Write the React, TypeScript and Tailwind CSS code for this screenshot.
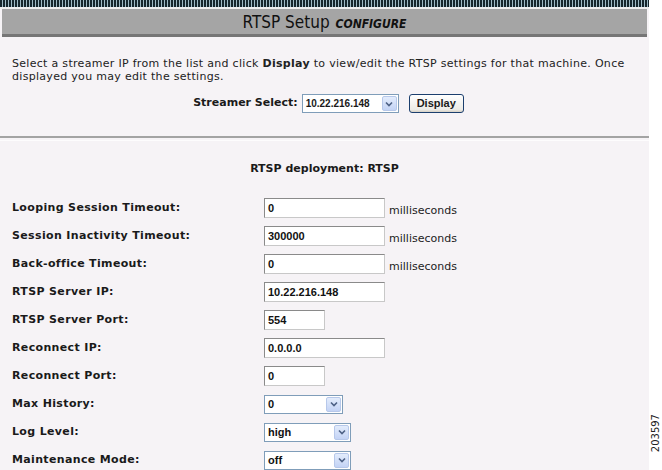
import React from 'react';

const verdana = { fontFamily: '"DejaVu Sans", Verdana, sans-serif' };

type Row = {
  label: string;
  kind: 'input' | 'select';
  value: string;
  width: string;
  unit?: string;
};

const rows: Row[] = [
  { label: 'Looping Session Timeout:', kind: 'input', value: '0', width: 'w-[121px]', unit: 'milliseconds' },
  { label: 'Session Inactivity Timeout:', kind: 'input', value: '300000', width: 'w-[121px]', unit: 'milliseconds' },
  { label: 'Back-office Timeout:', kind: 'input', value: '0', width: 'w-[121px]', unit: 'milliseconds' },
  { label: 'RTSP Server IP:', kind: 'input', value: '10.22.216.148', width: 'w-[121px]' },
  { label: 'RTSP Server Port:', kind: 'input', value: '554', width: 'w-[61px]' },
  { label: 'Reconnect IP:', kind: 'input', value: '0.0.0.0', width: 'w-[121px]' },
  { label: 'Reconnect Port:', kind: 'input', value: '0', width: 'w-[61px]' },
  { label: 'Max History:', kind: 'select', value: '0', width: 'w-[79px]' },
  { label: 'Log Level:', kind: 'select', value: 'high', width: 'w-[87px]' },
  { label: 'Maintenance Mode:', kind: 'select', value: 'off', width: 'w-[87px]' },
];

const Arrow = () => (
  <div className="w-[15px] h-[15px] mr-[1px] rounded-[2px] border border-[#b7c8ea] bg-[linear-gradient(180deg,#e3ecfc_0%,#c3d3f5_100%)] flex items-center justify-center">
    <svg width="8" height="6" viewBox="0 0 8 6">
      <path d="M1 1.5 L4 4.5 L7 1.5" fill="none" stroke="#4d6185" strokeWidth="1.6" />
    </svg>
  </div>
);

const FakeSelect = ({ value, width }: { value: string; width: string }) => (
  <div className={`${width} h-[19px] border border-[#7f9db9] bg-white flex items-center justify-between`}>
    <span className="pl-[3px] text-[11px] font-bold text-[#111]" style={{ fontFamily: '"Liberation Sans", Arial, sans-serif' }}>
      {value}
    </span>
    <Arrow />
  </div>
);

const FakeInput = ({ value, width }: { value: string; width: string }) => (
  <div className={`${width} h-[20px] border border-[#8a8a8a] border-r-[#c8c8c8] border-b-[#c8c8c8] bg-white flex items-center`}>
    <span className="pl-[3px] text-[11px] font-bold text-[#111]" style={{ fontFamily: '"Liberation Sans", Arial, sans-serif' }}>
      {value}
    </span>
  </div>
);

export default function App() {
  return (
    <div className="w-[662px] h-[470px] bg-white flex overflow-hidden text-[#1a1a1a]" style={verdana}>
      {/* main panel: plain block flow so nothing gets squeezed */}
      <div className="w-[649px] h-full shrink-0 bg-[#f6f3f6] overflow-hidden">
        <div className="h-[7px] bg-[repeating-linear-gradient(90deg,#15262c_0px,#15262c_2px,#9fbac4_2px,#9fbac4_3px)]" />
        <div className="h-[2px] bg-[#eeeeee]" />
        <div className="mx-[2px] h-[28px] bg-[#a5a5a5] border-b-[3px] border-[#767676] flex items-center justify-center gap-[6px] pt-[2px]">
          <span className="text-[17px] text-[#111] leading-none" style={{ fontFamily: '"DejaVu Sans Condensed", "DejaVu Sans", sans-serif' }}>
            RTSP Setup
          </span>
          <span className="text-[12px] font-bold italic text-[#111] leading-none uppercase mt-[2px]" style={{ fontFamily: '"DejaVu Sans Condensed", "DejaVu Sans", sans-serif' }}>
            configure
          </span>
        </div>

        <p className="mt-[20px] px-[12px] text-[11px] leading-[13px] tracking-[0.3px] text-[#222]">
          Select a streamer IP from the list and click <b>Display</b> to view/edit the RTSP settings for that machine. Once
          displayed you may edit the settings.
        </p>

        <div className="mt-[11px] flex items-center justify-center pl-[8px]">
          <span className="text-[11px] font-bold mr-[4px]">Streamer Select:</span>
          <div className="w-[97px] h-[19px] border border-[#7f9db9] bg-white flex items-center justify-between">
            <span className="pl-[3px] text-[10px] font-bold" style={{ fontFamily: '"Liberation Sans", Arial, sans-serif' }}>
              10.22.216.148
            </span>
            <Arrow />
          </div>
          <div className="ml-[10px] h-[19px] px-[7px] rounded-[3px] border border-[#1c3f6e] bg-[linear-gradient(180deg,#ffffff_0%,#ecebe6_85%,#d6d0c5_100%)] flex items-center text-[11px] font-bold" style={{ fontFamily: '"Liberation Sans", Arial, sans-serif' }}>
            Display
          </div>
        </div>

        <div className="mt-[23px] h-[2px] bg-[#a3a3a3]" />
        <div className="mt-[2px] h-[1px] bg-[#fdfcfd]" />

        <div className="mt-[21px] text-center text-[11px] font-bold leading-[14px]">RTSP deployment: RTSP</div>

        <div className="mt-[18px]">
          {rows.map((r) => (
            <div key={r.label} className="h-[28px] flex items-center">
              <span className="w-[264px] shrink-0 pl-[12px] text-[11px] font-bold tracking-[0.35px]">{r.label}</span>
              {r.kind === 'input' ? (
                <FakeInput value={r.value} width={r.width} />
              ) : (
                <FakeSelect value={r.value} width={r.width} />
              )}
              {r.unit && <span className="ml-[4px] mt-[6px] text-[11px] text-[#222]">{r.unit}</span>}
            </div>
          ))}
        </div>
      </div>
      <div className="flex-1 h-full bg-white flex flex-col justify-end pb-[18px] items-center">
        <span className="text-[10px] text-[#222] [writing-mode:vertical-rl] rotate-180 leading-none" style={{ fontFamily: '"DejaVu Sans", sans-serif' }}>
          203597
        </span>
      </div>
    </div>
  );
}
